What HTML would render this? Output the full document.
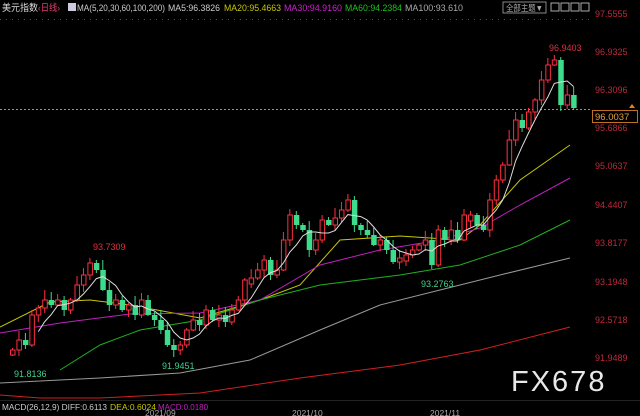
<!DOCTYPE html>
<html><head><meta charset="utf-8"><style>
html,body{margin:0;padding:0;background:#000;width:640px;height:416px;overflow:hidden}
svg{display:block}
text{font-family:"Liberation Sans","Noto Sans CJK SC",sans-serif}
</style></head><body>
<svg id="s" width="640" height="416" xmlns="http://www.w3.org/2000/svg">
<rect width="640" height="416" fill="#000"/>
<line x1="0" y1="19.5" x2="590" y2="19.5" stroke="#2a5a9a" stroke-dasharray="1,5"/>
<text x="2" y="11" font-size="9.5" fill="#ddd" textLength="36" lengthAdjust="spacingAndGlyphs">美元指数</text>
<text x="38" y="11" font-size="9.5" fill="#e04070" textLength="22" lengthAdjust="spacingAndGlyphs">‹日线›</text>
<rect x="68" y="3" width="8" height="8" fill="#ccd" />
<text x="77" y="11" font-size="9.5" fill="#ccc" textLength="88" lengthAdjust="spacingAndGlyphs">MA(5,20,30,60,100,200)</text>
<text x="168" y="11" font-size="9.5" fill="#ccc" textLength="52" lengthAdjust="spacingAndGlyphs">MA5:96.3826</text>
<text x="224" y="11" font-size="9.5" fill="#c8c800" textLength="57" lengthAdjust="spacingAndGlyphs">MA20:95.4663</text>
<text x="284" y="11" font-size="9.5" fill="#d020d0" textLength="58" lengthAdjust="spacingAndGlyphs">MA30:94.9160</text>
<text x="345" y="11" font-size="9.5" fill="#20c020" textLength="57" lengthAdjust="spacingAndGlyphs">MA60:94.2384</text>
<text x="405" y="11" font-size="9.5" fill="#aaa" textLength="58" lengthAdjust="spacingAndGlyphs">MA100:93.610</text>
<rect x="503" y="2" width="43" height="11" fill="none" stroke="#888"/>
<text x="506" y="11" font-size="8.5" fill="#aaa" textLength="37" lengthAdjust="spacingAndGlyphs">全部主题▼</text>
<rect x="551" y="3" width="8" height="8" fill="none" stroke="#aaa"/>
<rect x="561" y="3" width="8" height="8" fill="none" stroke="#aaa"/>
<rect x="571" y="3" width="8" height="8" fill="none" stroke="#aaa"/>
<rect x="581" y="3" width="8" height="8" fill="none" stroke="#aaa"/>
<g font-size="9" fill="#c0283c">
<text x="595" y="17">97.5555</text><text x="595" y="55">96.9325</text><text x="595" y="93">96.3096</text>
<text x="595" y="131">95.6866</text><text x="595" y="169">95.0637</text><text x="595" y="208">94.4407</text>
<text x="595" y="246">93.8177</text><text x="595" y="285">93.1948</text><text x="595" y="323">92.5718</text>
<text x="595" y="361">91.9489</text></g>
<line x1="0" y1="109.5" x2="592" y2="109.5" stroke="#e08020" stroke-dasharray="2,2"/>
<rect x="592.5" y="110.5" width="45" height="12" fill="#000" stroke="#c07020"/>
<text x="595" y="120" font-size="9.5" fill="#e0a040">96.0037</text>
<path d="M632 104l3 4h-6z" fill="#e08020"/>
<g fill="none" stroke-width="1">
<polyline stroke="#c8c800" points="0,327 50,302 90,300 130,305 200,318 260,300 300,285 340,240 400,236 460,240 480,225 520,180 570,145"/>
<polyline stroke="#c020c0" points="0,333 60,323 130,314 200,313 260,300 320,265 380,250 440,240 480,228 520,205 570,178"/>
<polyline stroke="#20b020" points="60,370 100,345 140,330 200,320 260,300 320,285 400,275 460,265 520,245 570,220"/>
<polyline stroke="#999" points="0,383 100,378 180,373 250,360 320,330 380,305 440,290 500,275 570,258"/>
<polyline stroke="#d02020" points="0,395 40,398 100,398 200,393 300,378 400,365 480,350 570,327"/>
</g>
<g id="c"></g>
<text x="93" y="250" font-size="9" fill="#e03040">93.7309</text>
<text x="549" y="51" font-size="9" fill="#e03040">96.9403</text>
<text x="14" y="377" font-size="9" fill="#40d090">91.8136</text>
<text x="162" y="369" font-size="9" fill="#40d090">91.9451</text>
<text x="421" y="287" font-size="9" fill="#40d090">93.2763</text>
<text x="511" y="391" font-size="29" fill="#e8e8e8" letter-spacing="2">FX678</text>
<line x1="0" y1="400.5" x2="640" y2="400.5" stroke="#222"/>
<text x="2" y="410" font-size="8.5" fill="#ccc" textLength="105" lengthAdjust="spacingAndGlyphs">MACD(26,12,9) DIFF:0.6113</text>
<text x="110" y="410" font-size="8.5" fill="#c8c800" textLength="46" lengthAdjust="spacingAndGlyphs">DEA:0.6024</text>
<text x="158" y="410" font-size="8.5" fill="#c020c0" textLength="50" lengthAdjust="spacingAndGlyphs">MACD:0.0180</text>
<g font-size="8.5" fill="#aaa"><text x="145" y="416">2021/09</text><text x="292" y="416">2021/10</text><text x="430" y="416">2021/11</text></g>
</svg>
<script>
var C=[350,340,345,315,308,300,305,300,310,300,285,275,263,270,290,305,300,310,305,315,300,315,320,330,345,350,345,330,320,325,310,320,315,322,310,300,280,278,270,260,275,270,240,215,225,230,250,240,220,225,218,210,200,225,230,235,245,240,250,262,258,255,250,245,240,265,230,240,230,240,215,215,225,230,200,180,165,140,120,128,112,100,80,65,60,105,95,108];
var g=document.getElementById('c'),s='',m='';
for(var i=0;i<C.length;i++){
var x=10+i*6.45,o=i?C[i-1]:355,c=C[i];
if(Math.abs(o-c)<4){o=c+(i%2?6:-6);}
var t=Math.min(o,c),b=Math.max(o,c);
var k=(i*7)%9+2;
var up=c<o;var col=up?'#ff3040':'#3cdc8c';
s+='<line x1="'+(x+2.5)+'" y1="'+(t-k)+'" x2="'+(x+2.5)+'" y2="'+(b+(i*5)%7+1)+'" stroke="'+col+'"/>';
s+=up?'<rect x="'+(x+0.5)+'" y="'+t+'" width="4.5" height="'+(b-t)+'" fill="#000" stroke="'+col+'"/>':'<rect x="'+x+'" y="'+t+'" width="5.5" height="'+(b-t)+'" fill="'+col+'"/>';
if(i>=4){var a=0;for(var j=i-4;j<=i;j++)a+=C[j];m+=(x+2.5)+','+(a/5)+' ';}
}
s+='<polyline fill="none" stroke="#ddd" points="'+m+'"/>';
g.innerHTML=s;
</script>
</body></html>
